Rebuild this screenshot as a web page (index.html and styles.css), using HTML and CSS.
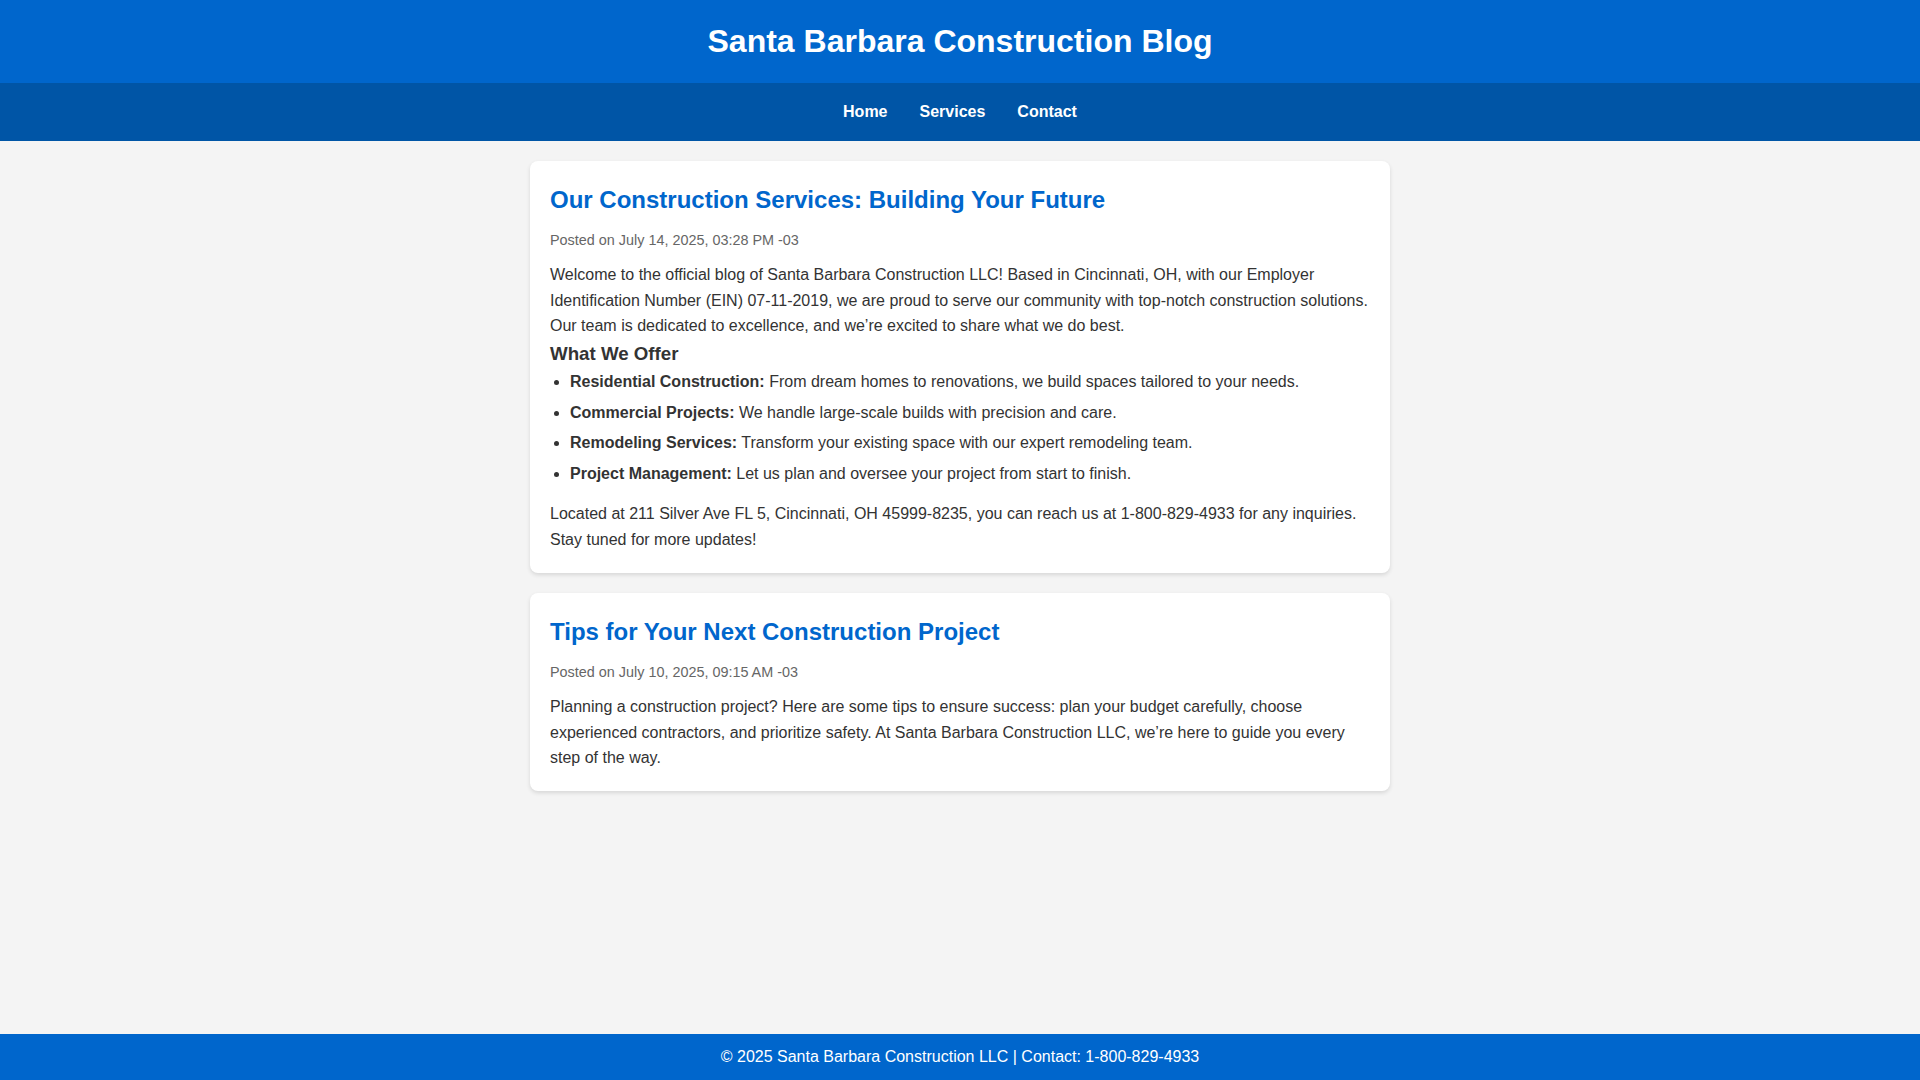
FILE: index.html
```html
<!DOCTYPE html>
<html lang="en">
<head>
<meta charset="utf-8">
<title>Santa Barbara Construction Blog</title>
<link rel="stylesheet" href="styles.css">
</head>
<body>
<header class="site-header">
  <h1 class="site-title">Santa Barbara Construction Blog</h1>
</header>
<nav class="site-nav">
  <a href="#" class="nav-link">Home</a>
  <a href="#" class="nav-link">Services</a>
  <a href="#" class="nav-link">Contact</a>
</nav>
<main class="content">
  <article class="post">
    <h2 class="post-title">Our Construction Services: Building Your Future</h2>
    <p class="post-meta">Posted on July 14, 2025, 03:28 PM -03</p>
    <p class="post-text">Welcome to the official blog of Santa Barbara Construction LLC! Based in Cincinnati, OH, with our Employer Identification Number (EIN) 07-11-2019, we are proud to serve our community with top-notch construction solutions. Our team is dedicated to excellence, and we’re excited to share what we do best.</p>
    <h3 class="post-subtitle">What We Offer</h3>
    <ul class="post-list">
      <li><strong>Residential Construction:</strong> From dream homes to renovations, we build spaces tailored to your needs.</li>
      <li><strong>Commercial Projects:</strong> We handle large-scale builds with precision and care.</li>
      <li><strong>Remodeling Services:</strong> Transform your existing space with our expert remodeling team.</li>
      <li><strong>Project Management:</strong> Let us plan and oversee your project from start to finish.</li>
    </ul>
    <p class="post-text">Located at 211 Silver Ave FL 5, Cincinnati, OH 45999-8235, you can reach us at 1-800-829-4933 for any inquiries. Stay tuned for more updates!</p>
  </article>
  <article class="post">
    <h2 class="post-title">Tips for Your Next Construction Project</h2>
    <p class="post-meta">Posted on July 10, 2025, 09:15 AM -03</p>
    <p class="post-text">Planning a construction project? Here are some tips to ensure success: plan your budget carefully, choose experienced contractors, and prioritize safety. At Santa Barbara Construction LLC, we’re here to guide you every step of the way.</p>
  </article>
</main>
<footer class="site-footer">
  <p class="footer-text">© 2025 Santa Barbara Construction LLC | Contact: 1-800-829-4933</p>
</footer>
</body>
</html>
```

FILE: styles.css
```css
html, body {
  margin: 0;
  padding: 0;
}

body {
  font-family: "Liberation Sans", Arial, sans-serif;
  font-size: 16px;
  line-height: 1.6;
  color: #333;
  background: #f4f4f4;
  min-height: 100vh;
  display: flex;
  flex-direction: column;
}

.site-header {
  background: #0066cc;
  color: #fff;
  text-align: center;
  padding: 16px 20px;
}

.site-title {
  margin: 0;
  font-size: 32px;
  font-weight: bold;
  line-height: 1.6;
}

.site-nav {
  background: #0055a6;
  display: flex;
  justify-content: center;
  gap: 32px;
  padding: 16px 0;
}

.nav-link {
  color: #fff;
  text-decoration: none;
  font-weight: bold;
}

.content {
  flex: 1;
  width: 100%;
  max-width: 900px;
  margin: 0 auto;
  padding: 20px;
  box-sizing: border-box;
}

.post {
  background: #fff;
  border-radius: 8px;
  box-shadow: 0 2px 4px rgba(0, 0, 0, 0.12);
  padding: 20px;
  margin-bottom: 20px;
}

.post-title {
  margin: 0 0 10px;
  font-size: 24px;
  line-height: 1.6;
  color: #0066cc;
}

.post-meta {
  margin: 0 0 10px;
  font-size: 0.9em;
  color: #666;
}

.post-text {
  margin: 0;
}

.post-subtitle {
  margin: 0;
  font-size: 1.17em;
  line-height: 1.6;
}

.post-list {
  margin: 0 0 15px;
  padding-left: 20px;
}

.post-list li {
  margin-bottom: 5px;
}

.site-footer {
  background: #0066cc;
  color: #fff;
  text-align: center;
  padding: 10px 0;
}

.footer-text {
  margin: 0;
}
```
